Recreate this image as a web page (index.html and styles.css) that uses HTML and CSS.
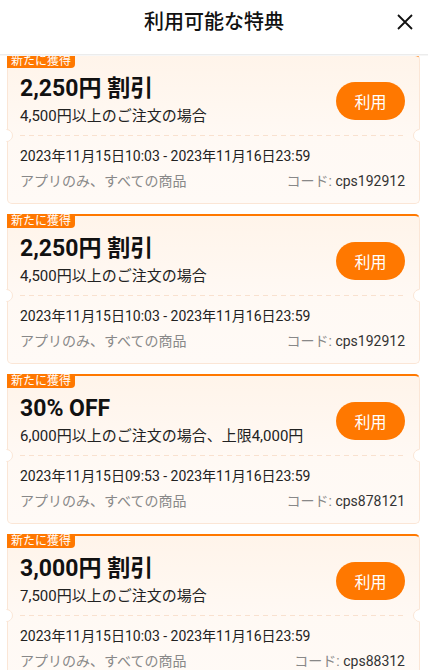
FILE: index.html
```html
<!DOCTYPE html>
<html lang="ja">

<head>
  <meta charset="UTF-8">
  <meta name="viewport" content="width=device-width, initial-scale=1.0">
  <title>利用可能な特典</title>
  <link rel="stylesheet" href="styles.css">
</head>

<body>
  <!-- Header -->
  <div class="header">
    <span></span>
    <h1>利用可能な特典</h1>
    <button class="close" aria-label="閉じる">
      <svg width="16" height="16" viewBox="0 0 16 16">
        <path d="M1 1 L15 15 M15 1 L1 15" stroke="#111" stroke-width="1.8" fill="none" />
      </svg>
    </button>
  </div>

  <!-- Coupon List -->
  <div class="coupon-list">
    <div class="coupon">
      <span class="badge">新たに獲得</span>
      <div class="coupon-top">
        <div class="coupon-info">
          <div class="coupon-title">2,250円 割引</div>
          <div class="coupon-cond">4,500円以上のご注文の場合</div>
        </div>
        <button class="use-btn">利用</button>
      </div>
      <div class="divider"></div>
      <div class="coupon-bottom">
        <div class="coupon-date">2023年11月15日10:03 - 2023年11月16日23:59</div>
        <div class="coupon-meta">
          <span>アプリのみ、すべての商品</span>
          <span>コード: <span class="code">cps192912</span></span>
        </div>
      </div>
    </div>

    <div class="coupon">
      <span class="badge">新たに獲得</span>
      <div class="coupon-top">
        <div class="coupon-info">
          <div class="coupon-title">2,250円 割引</div>
          <div class="coupon-cond">4,500円以上のご注文の場合</div>
        </div>
        <button class="use-btn">利用</button>
      </div>
      <div class="divider"></div>
      <div class="coupon-bottom">
        <div class="coupon-date">2023年11月15日10:03 - 2023年11月16日23:59</div>
        <div class="coupon-meta">
          <span>アプリのみ、すべての商品</span>
          <span>コード: <span class="code">cps192912</span></span>
        </div>
      </div>
    </div>

    <div class="coupon">
      <span class="badge">新たに獲得</span>
      <div class="coupon-top">
        <div class="coupon-info">
          <div class="coupon-title">30% OFF</div>
          <div class="coupon-cond">6,000円以上のご注文の場合、上限4,000円</div>
        </div>
        <button class="use-btn">利用</button>
      </div>
      <div class="divider"></div>
      <div class="coupon-bottom">
        <div class="coupon-date">2023年11月15日09:53 - 2023年11月16日23:59</div>
        <div class="coupon-meta">
          <span>アプリのみ、すべての商品</span>
          <span>コード: <span class="code">cps878121</span></span>
        </div>
      </div>
    </div>

    <div class="coupon">
      <span class="badge">新たに獲得</span>
      <div class="coupon-top">
        <div class="coupon-info">
          <div class="coupon-title">3,000円 割引</div>
          <div class="coupon-cond">7,500円以上のご注文の場合</div>
        </div>
        <button class="use-btn">利用</button>
      </div>
      <div class="divider"></div>
      <div class="coupon-bottom">
        <div class="coupon-date">2023年11月15日10:03 - 2023年11月16日23:59</div>
        <div class="coupon-meta">
          <span>アプリのみ、すべての商品</span>
          <span>コード: <span class="code">cps88312</span></span>
        </div>
      </div>
    </div>
  </div>
</body>

</html>
```

FILE: styles.css
```css
body {
  margin: 0;
  font-family: Roboto, "Noto Sans CJK JP", sans-serif;
  background-color: #ffffff;
  color: #222222;
  overflow: hidden;
}

/* Header */
.header {
  position: relative;
  z-index: 1;
  height: 54px;
  display: grid;
  grid-template-columns: 1fr auto 1fr;
  align-items: start;
  background-color: #ffffff;
  box-shadow: 0 1px 0 #ececec, 0 2px 0 #f6f6f6;
}

.header h1 {
  margin: 0;
  font-size: 20px;
  font-weight: 500;
  line-height: 44px;
  color: #111111;
}

.close {
  justify-self: end;
  margin: 14px 15px 0 0;
  padding: 0;
  width: 16px;
  height: 16px;
  border: none;
  background: none;
  display: flex;
}

/* Coupon list */
.coupon-list {
  padding: 0 8px 0 7px;
}

.coupon {
  position: relative;
  height: 150px;
  box-sizing: border-box;
  margin-bottom: 10px;
  padding: 0 14px 0 12px;
  border: 1px solid #fbe6d6;
  border-top: 2px solid #ff7800;
  border-radius: 5px;
  background: linear-gradient(180deg, #fff4ea 0%, #fff9f4 55%, #fffaf6 100%);
}

.badge {
  position: absolute;
  top: -2px;
  left: -1px;
  padding: 0 4px;
  height: 14px;
  font-size: 12px;
  line-height: 14px;
  color: #ffffff;
  background-color: #ff7800;
  border-bottom-right-radius: 4px;
}

.coupon-top {
  display: flex;
  align-items: center;
  justify-content: space-between;
  padding: 19px 0 9px;
}

.coupon-title {
  font-size: 23px;
  font-weight: bold;
  line-height: 28px;
  color: #111111;
}

.coupon-cond {
  margin-top: 3px;
  font-size: 15px;
  line-height: 20px;
}

.use-btn {
  width: 69px;
  height: 38px;
  border: none;
  border-radius: 19px;
  background-color: #ff7800;
  color: #ffffff;
  font-family: inherit;
  font-size: 16px;
  cursor: pointer;
}

/* Dashed divider with ticket notches */
.divider {
  position: relative;
  height: 1px;
  background-image: linear-gradient(to right, #f9e1cf 55%, transparent 55%);
  background-size: 9px 1px;
  background-repeat: repeat-x;
}

.divider:before,
.divider:after {
  content: "";
  position: absolute;
  top: -6px;
  width: 11px;
  height: 11px;
  border: 1px solid #fbe6d6;
  border-radius: 50%;
  background-color: #ffffff;
  transform: rotate(45deg);
}

.divider:before {
  left: -20px;
  border-color: #fbe6d6 #fbe6d6 transparent transparent;
}

.divider:after {
  right: -21px;
  border-color: transparent transparent #fbe6d6 #fbe6d6;
}

.coupon-bottom {
  padding-top: 10px;
  font-size: 14px;
  line-height: 20px;
}

.coupon-meta {
  display: flex;
  justify-content: space-between;
  margin-top: 5px;
  color: #888888;
}

.code {
  color: #333333;
}
```
